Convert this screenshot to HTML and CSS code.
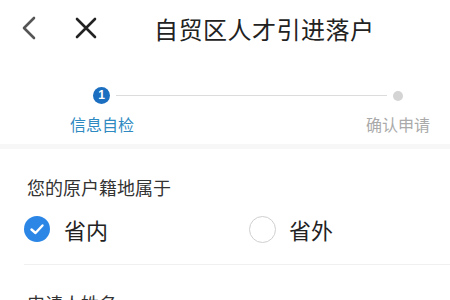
FILE: index.html
```html
<!DOCTYPE html>
<html lang="zh">
<head>
    <meta charset="UTF-8">
    <meta name="viewport" content="width=device-width, initial-scale=1.0">
    <title>自贸区人才引进落户</title>
    <link rel="stylesheet" href="styles.css">
</head>
<body>
    <div class="header">
        <span class="icon back">
            <svg width="16" height="24" viewBox="0 0 16 24"><path d="M13 2 L3 12 L13 22" fill="none" stroke="#555" stroke-width="2.6" stroke-linecap="round" stroke-linejoin="round"/></svg>
        </span>
        <span class="icon close">
            <svg width="22" height="22" viewBox="0 0 22 22"><path d="M2 2 L20 20 M20 2 L2 20" fill="none" stroke="#222" stroke-width="2.6" stroke-linecap="round"/></svg>
        </span>
        <h1>自贸区人才引进落户</h1>
    </div>
    <div class="steps">
        <div class="track">
            <span class="dot active">1</span>
            <span class="line"></span>
            <span class="dot"></span>
        </div>
        <div class="labels">
            <span class="step-label active">信息自检</span>
            <span class="step-label">确认申请</span>
        </div>
    </div>
    <div class="gap"></div>
    <div class="form">
        <div class="form-group">
            <div class="label">您的原户籍地属于</div>
            <div class="radios">
                <label class="radio checked">
                    <span class="mark">
                        <svg width="26" height="26" viewBox="0 0 26 26"><circle cx="13" cy="13" r="13" fill="#2b86e6"/><path d="M7.5 13.5 L11.5 17 L18.5 9.5" fill="none" stroke="#fff" stroke-width="2.4" stroke-linecap="round" stroke-linejoin="round"/></svg>
                    </span>
                    省内
                </label>
                <label class="radio">
                    <span class="mark empty"></span>
                    省外
                </label>
            </div>
        </div>
        <div class="form-group">
            <div class="label">申请人姓名</div>
        </div>
    </div>
</body>
</html>
```

FILE: styles.css
```css
body {
    font-family: "Noto Sans CJK SC", "Noto Sans", sans-serif;
    margin: 0;
    background-color: #ffffff;
    color: #222;
    width: 450px;
    height: 300px;
    overflow: hidden;
}
.header {
    display: flex;
    align-items: center;
    height: 56px;
    padding-left: 21px;
}
.icon {
    display: flex;
    align-items: center;
}
.close {
    margin-left: 38px;
}
.header h1 {
    font-size: 24px;
    font-weight: normal;
    margin: 0 0 0 57px;
    color: #222;
    letter-spacing: 0.5px;
}
.steps {
    height: 88px;
    box-sizing: border-box;
    padding-top: 31px;
}
.track {
    display: flex;
    align-items: center;
    padding: 0 47px 0 93px;
}
.dot {
    width: 10px;
    height: 10px;
    border-radius: 50%;
    background-color: #d4d4d4;
}
.dot.active {
    width: 17px;
    height: 17px;
    background-color: #1c6fc0;
    color: #fff;
    font-size: 12px;
    font-weight: bold;
    line-height: 17px;
    text-align: center;
    font-family: "Liberation Sans", sans-serif;
}
.line {
    flex: 1;
    height: 1px;
    background-color: #dcdcdc;
    margin: 0 6px;
}
.labels {
    display: flex;
    justify-content: space-between;
    padding: 0 20px 0 70px;
    margin-top: 8px;
}
.step-label {
    font-size: 16px;
    color: #aaa;
}
.step-label.active {
    color: #2f8ac2;
}
.gap {
    height: 5px;
    background-color: #f7f7f7;
}
.form {
    padding-left: 24px;
}
.form-group {
    border-bottom: 1px solid #f0f0f0;
    padding-top: 25px;
}
.label {
    font-size: 18px;
    color: #333;
    padding-left: 3px;
}
.radios {
    display: flex;
    padding: 13px 0 19px;
}
.radio {
    display: flex;
    flex: none;
    align-items: center;
    font-size: 22px;
    color: #222;
}
.radio.checked {
    width: 225px;
}
.mark {
    display: flex;
    width: 27px;
    height: 27px;
    margin-right: 13px;
    align-items: center;
}
.mark.empty {
    box-sizing: border-box;
    border: 1.5px solid #cfcfcf;
    border-radius: 50%;
}
```
